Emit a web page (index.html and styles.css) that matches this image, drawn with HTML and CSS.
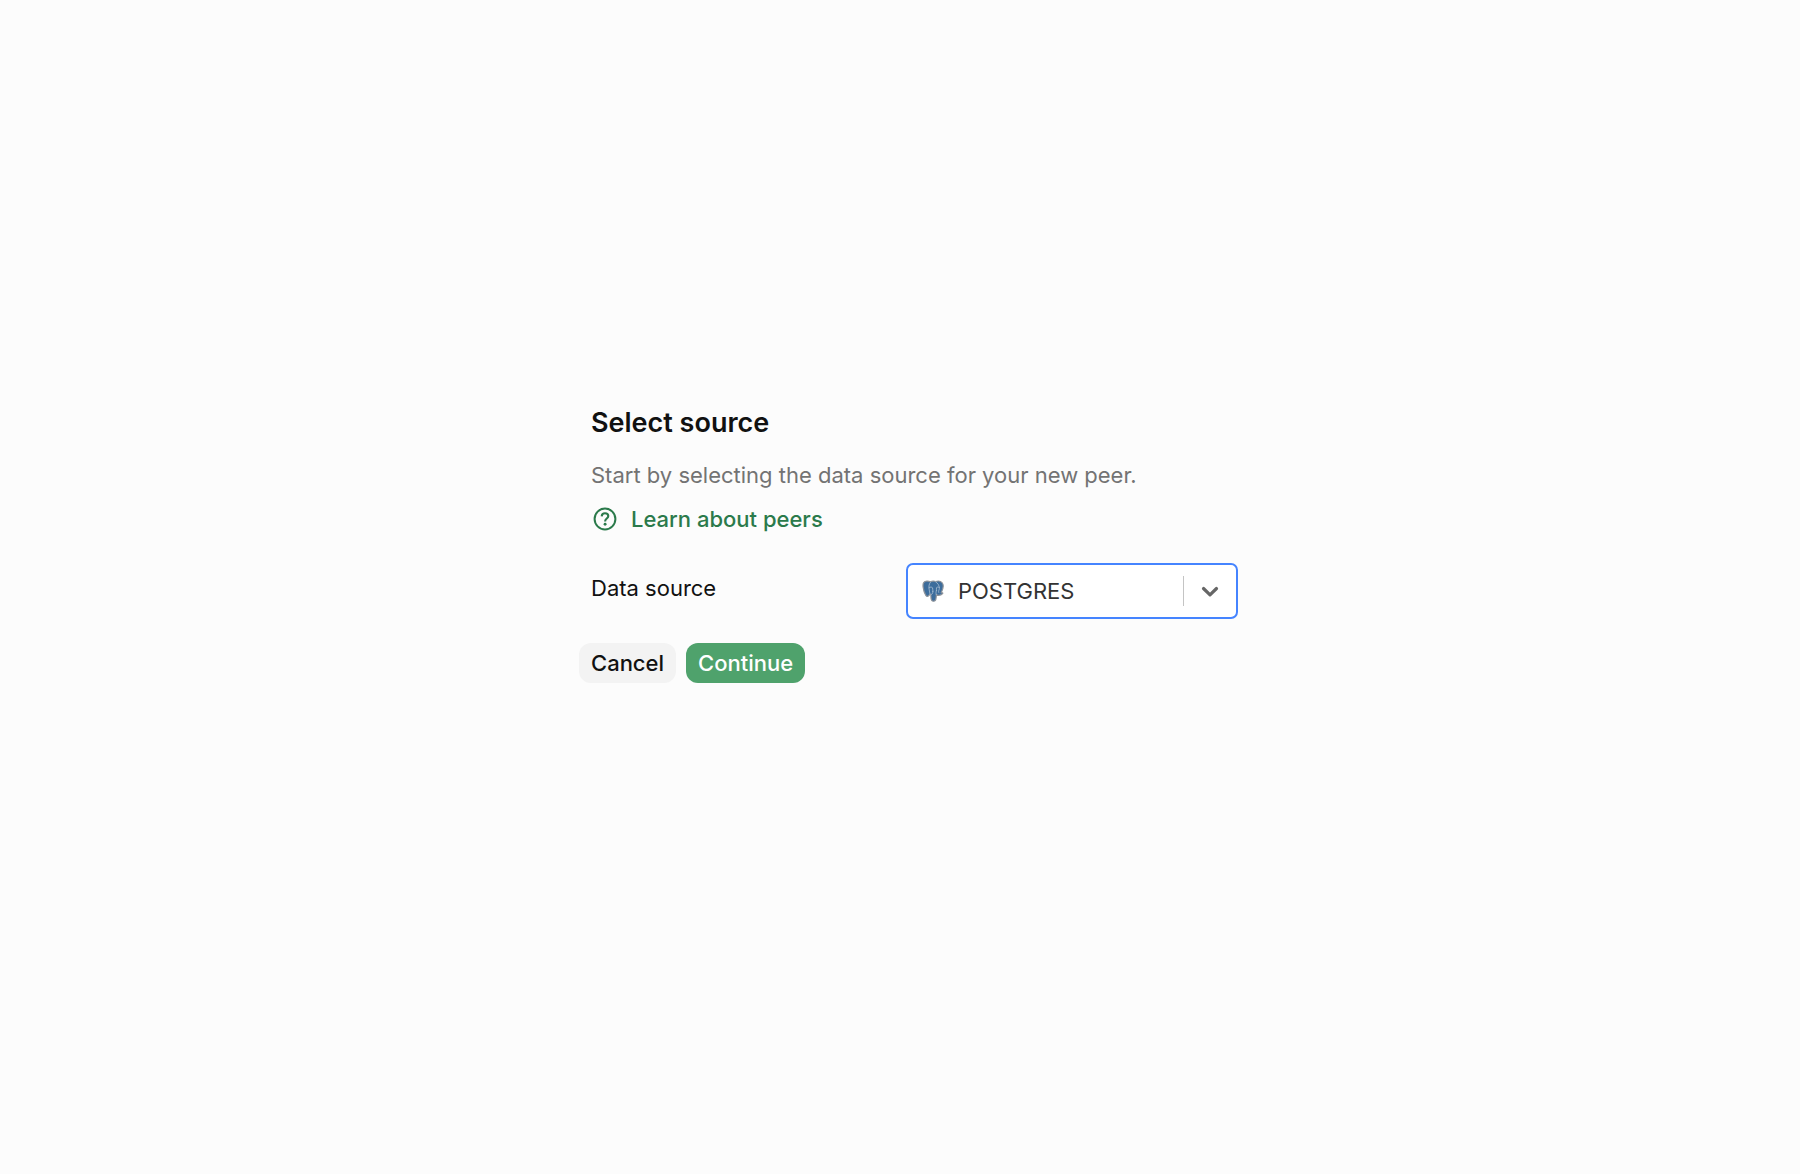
FILE: index.html
```html
<!DOCTYPE html>
<html lang="en">
<head>
<meta charset="utf-8">
<meta name="viewport" content="width=device-width, initial-scale=1">
<title>Select source</title>
<link rel="stylesheet" href="styles.css">
</head>
<body>
<main class="page">
  <form class="panel">
    <header class="intro">
      <h1 class="title">Select source</h1>
      <p class="lead">Start by selecting the data source for your new peer.</p>
      <a class="learn" href="#peers">
        <svg class="help-icon" viewBox="0 0 24 24" aria-hidden="true">
          <circle cx="12" cy="12" r="10.4" fill="none" stroke="currentColor" stroke-width="2"/>
          <path d="M8.700 9.400C8.800 7.400 10.200 6.200 12 6.200c1.900 0 3.300 1.200 3.300 2.900 0 2.400-3.200 2.600-3.200 5.300" fill="none" stroke="currentColor" stroke-width="2.100"/>
          <circle cx="12.100" cy="17.300" r="1.450" fill="currentColor"/>
        </svg>
        <span>Learn about peers</span>
      </a>
    </header>
    <div class="field">
      <label class="label" for="source">Data source</label>
      <div class="control">
        <select class="select" id="source" autocomplete="off">
          <option selected>POSTGRES</option>
        </select>
        <svg class="logo" viewBox="0 0 24 24" aria-hidden="true">
          <path d="M4.800 1.200C1.800 1.500.8 3.800 1.200 7.500c.4 3.500 1.500 7 3 9.300 1 1.400 2.200 1.300 3.200.2l1.300-1.400 1 .4c-.1 2.600.1 4.700.8 6 .9 1.700 3.700 1.500 4.500-.5.5-1.400.5-3.400.7-5.300 1.900.7 5.200.3 6.800-1.400.5-.7-.3-1-1.600-.9C23 10 24 5.500 22 3 20.200.8 17.200.9 14.900 1.600 13 1 11 1 9.300 1.900 7.900 1.300 6.200 1 4.800 1.200z" fill="#3d6d9c" stroke="#8d9299" stroke-width="1.300" stroke-linejoin="round"/>
          <path d="M9.400 2.200C7.600 4 7.300 7 7.800 10c.4 2.200.5 4 .9 5.400M14.900 2c2.800 1.700 4.200 4.400 4 7.300-.1 1.700-1.200 2.500-.7 4.200M10 15.800c1.500-.5 2.100-1.600 1.700-3.400M15.500 16c-.4-1.700-.3-3 .3-4.300M7.700 8.300c1.300-.8 3-.8 3.800.2.5 1.300-.1 2.700.4 4M18.800 8c-1.200-.5-2.500-.4-3 .4-.4 1 .4 2.100 0 3.300" fill="none" stroke="#b4c5d7" stroke-width=".8" stroke-linecap="round"/>
        </svg>
        <span class="divider"></span>
        <svg class="chevron" viewBox="0 0 18 12" aria-hidden="true">
          <path d="M2.500 2.500 9 8.800l6.500-6.300" fill="none" stroke="currentColor" stroke-width="3.200" stroke-linecap="round" stroke-linejoin="round"/>
        </svg>
      </div>
    </div>
    <div class="actions">
      <button class="button" type="button">Cancel</button>
      <button class="button button-primary" type="submit">Continue</button>
    </div>
  </form>
</main>
</body>
</html>
```
FILE: styles.css
```css
* {
  box-sizing: border-box;
}

body {
  margin: 0;
  background: #fcfcfc;
  color: #111;
  font-family: Inter, "Liberation Sans", sans-serif;
  font-size: 22px;
  line-height: 32px;
}

.page {
  display: flex;
  align-items: center;
  justify-content: center;
  min-height: 100vh;
  padding-bottom: 86px;
}

.panel {
  display: flex;
  flex-direction: column;
  gap: 24px;
  width: 100%;
  max-width: 676px;
  padding-left: 17px;
}

.intro {
  display: flex;
  flex-direction: column;
  align-items: flex-start;
  gap: 12px;
  padding-left: 12px;
}

.title {
  margin: 0 0 6px;
  font-size: 27px;
  line-height: 36px;
  font-weight: 600;
}

.lead {
  margin: 0;
  color: #737373;
}

.learn {
  display: flex;
  align-items: center;
  gap: 14px;
  padding-left: 2px;
  margin-bottom: 4px;
  color: #2b7a4b;
  font-weight: 500;
  text-decoration: none;
}

.help-icon {
  width: 24px;
  height: 24px;
}

.field {
  display: flex;
  justify-content: space-between;
  padding-left: 12px;
}

.label {
  padding-top: 9px;
}

.control {
  position: relative;
  width: 332px;
}

.select {
  display: block;
  appearance: none;
  width: 100%;
  height: 56px;
  padding: 0 60px 0 50px;
  border: 2px solid #4584ff;
  border-radius: 7px;
  outline: none;
  background: #fff;
  color: #333;
  font: inherit;
}

.logo {
  position: absolute;
  top: 17px;
  left: 16px;
  width: 22px;
  height: 22px;
  pointer-events: none;
}

.divider {
  position: absolute;
  top: 13px;
  bottom: 13px;
  right: 54px;
  width: 1px;
  background: #c4c4c4;
}

.chevron {
  position: absolute;
  top: 23px;
  right: 19px;
  width: 18px;
  height: 12px;
  color: #666;
  pointer-events: none;
}

.actions {
  display: flex;
  gap: 10px;
}

.button {
  height: 40px;
  padding: 0 12px;
  border: 0;
  border-radius: 12px;
  background: #f3f3f3;
  color: #111;
  font: inherit;
  font-weight: 500;
}

.button-primary {
  background: #4fa26c;
  color: #fff;
}
```
